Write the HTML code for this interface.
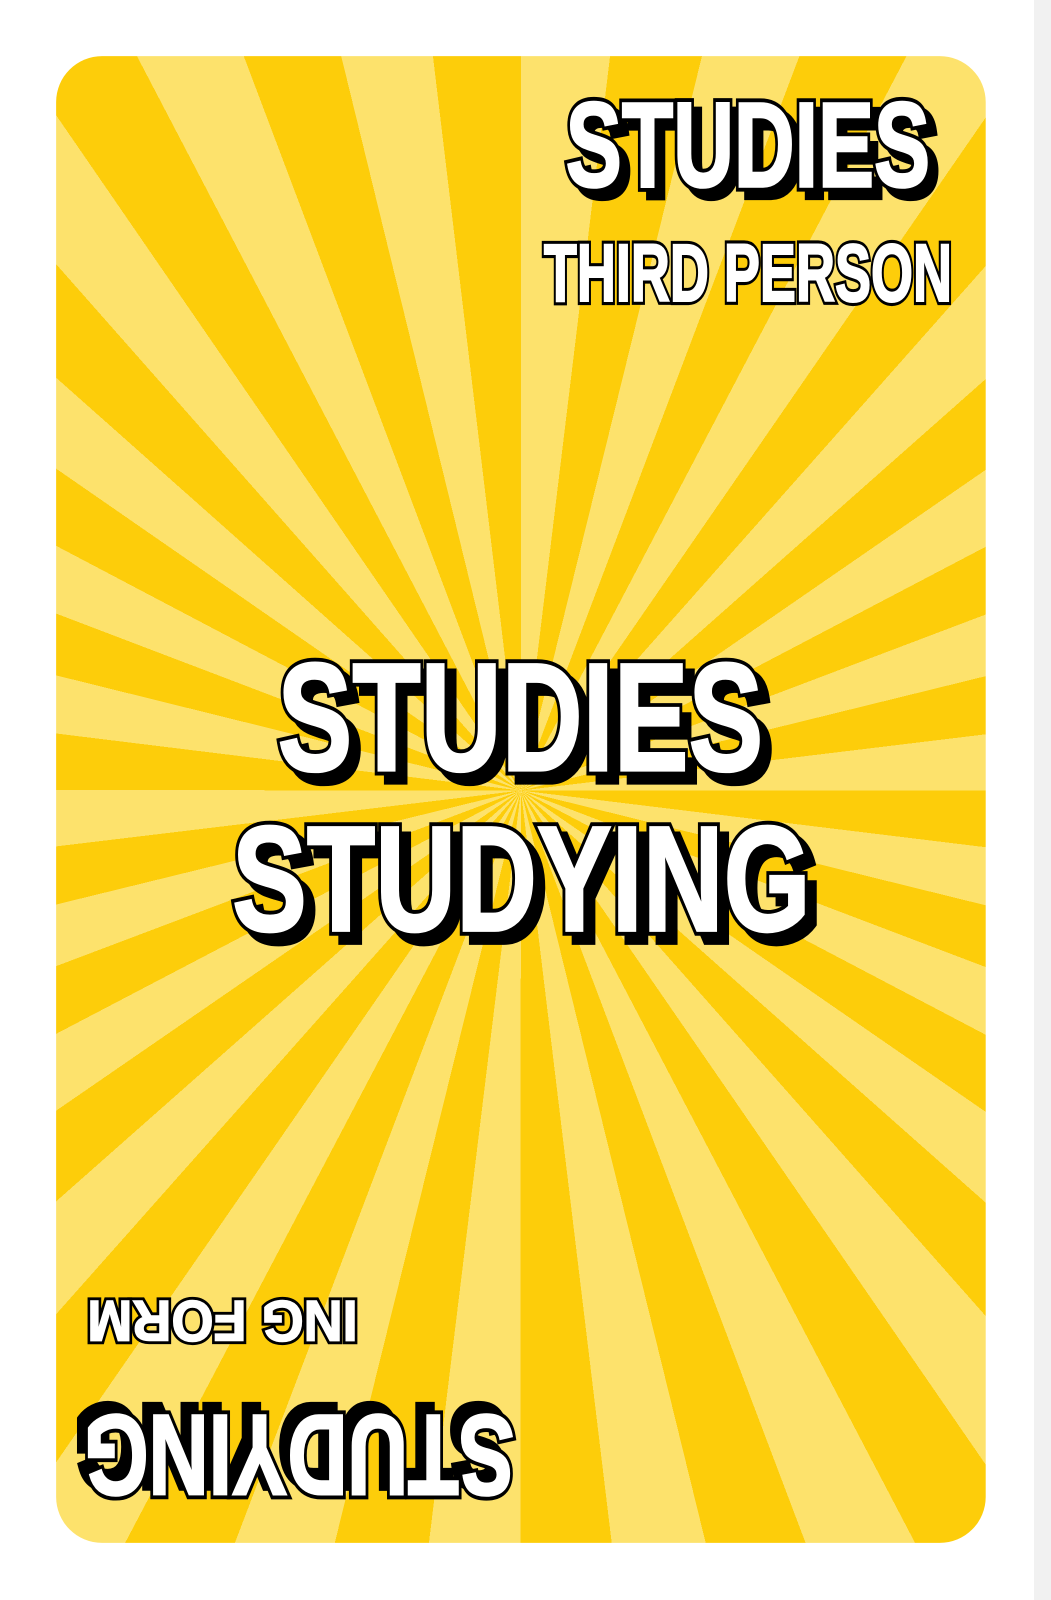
<!DOCTYPE html>
<html><head><meta charset="utf-8"><style>
html,body{margin:0;padding:0;background:#fff;width:1051px;height:1600px;overflow:hidden}
.strip{position:absolute;left:1034px;top:0;width:17px;height:1600px;background:#f1f1f1}
.wrap{position:absolute;left:0;top:0;width:1030px;height:1568px;transform:scale(1.0204);transform-origin:0 0}
.card{position:absolute;left:55px;top:55px;width:911px;height:1457px;border-radius:45px;overflow:hidden;
background:repeating-conic-gradient(from 0deg at 50% 49.4%,#fde26c 0deg 6.92deg,#fdcd0a 6.92deg 13.85deg)}
svg{position:absolute;left:0;top:0}
text{font-family:"Liberation Sans",sans-serif;font-weight:bold;text-anchor:middle}
.o{fill:#000;stroke:#000;stroke-width:10;stroke-linejoin:miter}
.w{fill:#fff;stroke:#fff;stroke-width:2.5;stroke-linejoin:miter}
.s{fill:#000;stroke:#000;stroke-width:10;stroke-linejoin:miter}
</style></head><body>
<div class="strip"></div>
<div class="wrap">
<div class="card"></div>
<svg width="1030" height="1568" viewBox="0 0 1030 1568">
<g>
<text class="s" x="741" y="191" font-size="118" textLength="357" lengthAdjust="spacingAndGlyphs">STUDIES</text>
<text class="o" x="733" y="183" font-size="118" textLength="357" lengthAdjust="spacingAndGlyphs">STUDIES</text>
<text class="w" x="733" y="183" font-size="118" textLength="357" lengthAdjust="spacingAndGlyphs">STUDIES</text>
<text class="o" x="733" y="295" font-size="80" textLength="400" lengthAdjust="spacingAndGlyphs" style="stroke-width:8">THIRD PERSON</text>
<text class="w" x="733" y="295" font-size="80" textLength="400" lengthAdjust="spacingAndGlyphs" style="stroke-width:2">THIRD PERSON</text>

<text class="s" x="519" y="764" font-size="151" textLength="476" lengthAdjust="spacingAndGlyphs">STUDIES</text>
<text class="o" x="510" y="755" font-size="151" textLength="476" lengthAdjust="spacingAndGlyphs">STUDIES</text>
<text class="w" x="510" y="755" font-size="151" textLength="476" lengthAdjust="spacingAndGlyphs">STUDIES</text>
<text class="s" x="520" y="921" font-size="147" textLength="567" lengthAdjust="spacingAndGlyphs">STUDYING</text>
<text class="o" x="511" y="912" font-size="147" textLength="567" lengthAdjust="spacingAndGlyphs">STUDYING</text>
<text class="w" x="511" y="912" font-size="147" textLength="567" lengthAdjust="spacingAndGlyphs">STUDYING</text>
</g>
<g transform="rotate(180 293 1420)">
<text class="s" x="301" y="1461" font-size="112" textLength="422" lengthAdjust="spacingAndGlyphs">STUDYING</text>
<text class="o" x="293" y="1453" font-size="112" textLength="422" lengthAdjust="spacingAndGlyphs">STUDYING</text>
<text class="w" x="293" y="1453" font-size="112" textLength="422" lengthAdjust="spacingAndGlyphs">STUDYING</text>
</g>
<g transform="rotate(180 218 1295)">
<text class="o" x="218" y="1315" font-size="56" textLength="265" lengthAdjust="spacingAndGlyphs" style="stroke-width:7">ING FORM</text>
<text class="w" x="218" y="1315" font-size="56" textLength="265" lengthAdjust="spacingAndGlyphs" style="stroke-width:1.5">ING FORM</text>
</g>
</svg>
</div>
</body></html>
